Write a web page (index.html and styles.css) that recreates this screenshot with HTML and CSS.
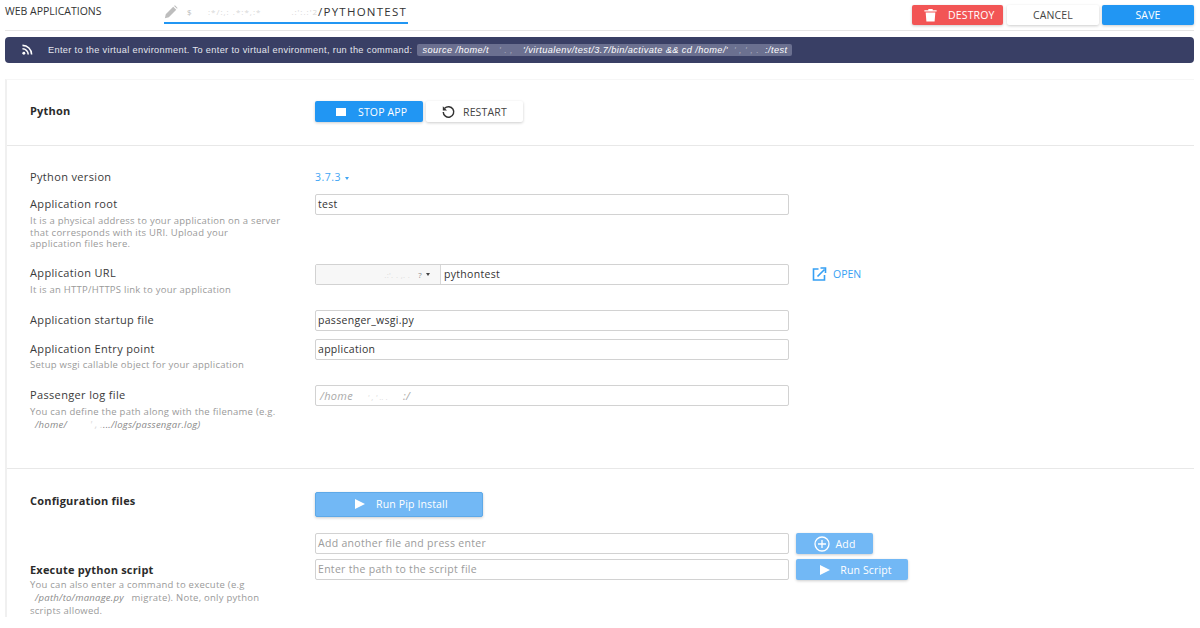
FILE: index.html
```html
<!DOCTYPE html>
<html lang="en">
<head>
<meta charset="utf-8">
<title>Web Applications</title>
<link rel="stylesheet" href="styles.css">
</head>
<body>
<header class="topbar">
  <div class="crumb">WEB APPLICATIONS</div>
  <div class="apptitle">
    <svg class="pencil" viewBox="0 0 16 16"><path d="M1 15l1-4.500L10.500 2l3.500 3.500L5.500 14z M11.500 1l1-.6 3 3-.6 1z" fill="#bdbdbd"/></svg>
    <span class="smudge smudge-s">$</span><span class="smudge smudge-a">:*/:,: .*:*,:*</span><span class="smudge smudge-b">.:':.:'2</span><span class="title-end">/PYTHONTEST</span>
  </div>
  <div class="actions">
    <button class="btn btn-red"><svg class="trash" viewBox="0 0 14 16"><path d="M0 2.500h14V4H0z M4.500 1h5v1.500h-5z M1.500 5h11l-.8 10.500H2.300z" fill="#fff"/></svg><span>DESTROY</span></button>
    <button class="btn btn-cancel">CANCEL</button>
    <button class="btn btn-save">SAVE</button>
  </div>
</header>

<div class="alert">
  <svg class="rss" viewBox="0 0 12 12"><circle cx="2" cy="10" r="1.600" fill="#fff"/><path d="M.5 5.200a6.300 6.300 0 0 1 6.300 6.300M.5 1.500a10 10 0 0 1 10 10" fill="none" stroke="#fff" stroke-width="1.700"/></svg>
  <span class="alert-text">Enter to the virtual environment. To enter to virtual environment, run the command:</span>
  <code class="cmd">source /home/t<span class="gap-a">' . ,</span>'/virtualenv/test/3.7/bin/activate &amp;&amp; cd /home/'<span class="gap-b">' , ' , .</span>:/test</code>
</div>

<main class="card">
  <section class="sec sec-app">
    <div class="row">
      <div class="label strong">Python</div>
      <div class="btns">
        <button class="btn btn-stop"><span class="square"></span><span>STOP APP</span></button>
        <button class="btn btn-restart"><svg class="restart" viewBox="0 0 16 16"><path d="M3.600 3.800A6 6 0 1 1 2 8" fill="none" stroke="#333" stroke-width="1.700"/><path d="M1.500 1.500v4.800h4.800z" fill="#333"/></svg><span>RESTART</span></button>
      </div>
    </div>
  </section>

  <section class="sec sec-form">
    <div class="row row-version">
      <div class="label">Python version</div>
      <div class="version">3.7.3<i class="caret caret-blue"></i></div>
    </div>

    <div class="row row-root">
      <div>
        <div class="label">Application root</div>
        <p class="help help-root">It is a physical address to your application on a server<br>that corresponds with its URI. Upload your<br>application files here.</p>
      </div>
      <div class="field">test</div>
    </div>

    <div class="row row-url">
      <div>
        <div class="label">Application URL</div>
        <p class="help">It is an HTTP/HTTPS link to your application</p>
      </div>
      <div class="field field-group">
        <div class="domain"><span class="smudge">.:'.  . ,. .</span><span class="dom-end">?</span><i class="caret"></i></div>
        <div class="uri">pythontest</div>
      </div>
      <a class="open"><svg class="ext" viewBox="0 0 14 14"><path d="M6 2H1v11h11V8" fill="none" stroke="#2196f3" stroke-width="1.600"/><path d="M5 9.500L12 2.500M8 1h5v5" fill="none" stroke="#2196f3" stroke-width="1.600"/></svg><span>OPEN</span></a>
    </div>

    <div class="row row-startup">
      <div class="label">Application startup file</div>
      <div class="field">passenger_wsgi.py</div>
    </div>

    <div class="row row-entry">
      <div>
        <div class="label">Application Entry point</div>
        <p class="help">Setup wsgi callable object for your application</p>
      </div>
      <div class="field">application</div>
    </div>

    <div class="row row-log">
      <div>
        <div class="label">Passenger log file</div>
        <p class="help help-code">You can define the path along with the filename (e.g.<br><em class="path">/home/<span class="gap-c">' , .</span>.../logs/passengar.log)</em></p>
      </div>
      <div class="field ph ph-path">/home<span class="gap-d">' , ' .. .</span>:/</div>
    </div>
  </section>

  <section class="sec sec-config">
    <div class="row row-pip">
      <div class="label strong">Configuration files</div>
      <div><button class="btn btn-light btn-pip"><svg class="play" viewBox="0 0 10 10"><path d="M0 0l10 5-10 5z" fill="#fff"/></svg><span>Run Pip Install</span></button></div>
    </div>
    <div class="row row-add">
      <div></div>
      <div class="field ph">Add another file and press enter</div>
      <button class="btn btn-light btn-add"><svg class="plus" viewBox="0 0 16 16"><circle cx="8" cy="8" r="7" fill="none" stroke="#fff" stroke-width="1.300"/><path d="M8 4v8M4 8h8" stroke="#fff" stroke-width="1.300"/></svg><span>Add</span></button>
    </div>
    <div class="row row-exec">
      <div>
        <div class="label strong">Execute python script</div>
        <p class="help help-code">You can also enter a command to execute (e.g<br><em class="path">/path/to/manage.py</em> <span class="migrate">migrate). Note, only python</span><br>scripts allowed.</p>
      </div>
      <div class="field ph">Enter the path to the script file</div>
      <button class="btn btn-light btn-run"><svg class="play" viewBox="0 0 10 10"><path d="M0 0l10 5-10 5z" fill="#fff"/></svg><span>Run Script</span></button>
    </div>
  </section>
</main>
</body>
</html>
```

FILE: styles.css
```css
* { box-sizing: border-box; }
html, body { margin: 0; height: 628px; overflow: hidden; background: #fff; }
body { font-family: "Open Sans", sans-serif; color: #333; font-size: 10px; padding: 0 6px 0 5px; }

.topbar { display: flex; align-items: flex-start; height: 31px; border-bottom: 1px solid #e6e6e6; }
.crumb { width: 159px; padding-top: 3px; font-size: 10.500px; line-height: 16px; color: #333; white-space: nowrap; }
.apptitle { display: flex; align-items: center; width: 244px; height: 24px; padding-top: 1px; border-bottom: 2px solid #2196f3; font-size: 11.500px; line-height: 20px; white-space: nowrap; }
.pencil { width: 14px; height: 14px; margin-right: 9px; flex: none; }
.smudge { color: #d8d8d8; font-size: 8px; }
.smudge-s { width: 21px; flex: none; color: #bbb; }
.smudge-a { width: 65px; flex: none; overflow: hidden; letter-spacing: 1px; }
.smudge-b { width: 36px; flex: none; margin-left: 9px; overflow: hidden; letter-spacing: 1px; text-align: right; }
.title-end { letter-spacing: 1.250px; }
.actions { display: flex; margin-left: auto; padding-top: 5px; }

.btn { display: flex; align-items: center; justify-content: center; border: 0; border-radius: 2px; font-family: "Open Sans", sans-serif; font-size: 10.500px; letter-spacing: .15px; padding: 0; color: #fff; box-shadow: 0 1px 3px rgba(0,0,0,.2); white-space: nowrap; }
.btn-red { width: 91px; height: 20px; background: #f25555; justify-content: flex-start; padding-left: 12px; }
.trash { width: 13px; height: 14px; margin-right: 11px; }
.btn-cancel { width: 92px; height: 20px; margin-left: 4px; background: #fff; color: #444; }
.btn-save { width: 92px; height: 20px; margin-left: 3px; background: #2196f3; }

.alert { display: flex; align-items: center; height: 26px; margin-top: 6px; padding-left: 17px; background: #393f65; border-radius: 4px; color: #e4e6ee; font-family: "Liberation Sans", Arial, sans-serif; font-size: 9.200px; white-space: nowrap; }
.rss { width: 11px; height: 11px; margin-right: 15px; flex: none; position: relative; top: -1px; }
.alert-text { letter-spacing: .35px; }
.cmd { margin-left: 5px; padding: 0 5px; height: 12px; line-height: 12px; border-radius: 2px; background: #6b7090; font-family: "Liberation Sans", Arial, sans-serif; font-style: italic; font-size: 9.200px; color: #fff; letter-spacing: .42px; }
.gap-a { display: inline-block; width: 34px; color: #a5a8bc; text-align: center; }
.gap-b { display: inline-block; width: 37px; color: #a5a8bc; text-align: center; }

.card { margin-top: 16px; border-left: 2px solid #f0f0f0; border-top: 1px solid #f6f6f6; }
.sec { padding-left: 23px; border-bottom: 1px solid #e8e8e8; }
.sec:last-child { border-bottom: 0; }
.sec-app { height: 66px; padding-top: 21px; }
.sec-form { height: 323px; padding-top: 21px; }
.sec-config { padding-top: 23px; }

.row { display: grid; grid-template-columns: 285px 474px auto; align-items: start; }
.label { font-size: 11px; line-height: 19px; letter-spacing: .35px; color: #3a3a3a; white-space: nowrap; }
.strong { font-weight: 700; letter-spacing: .2px; color: #2b2b2b; }
.row-pip .label { margin-top: -1px; }
.row-exec .label { margin-top: 1px; }
.row-url .label { margin-top: -1px; }
.help { margin: 1px 0 0; font-size: 9.500px; line-height: 11.500px; color: #9a9a9a; letter-spacing: .25px; white-space: nowrap; }
.help-root { margin-top: 2px; }
.row-url .help { margin-top: 2px; }
.help-code { line-height: 13px; }
.row-exec .help { margin-top: -1px; }
.path { display: inline-block; padding-left: 5px; color: #8a8a8a; font-style: italic; }
.gap-c { display: inline-block; width: 36px; text-align: right; color: #d8d8d8; }
.gap-d { display: inline-block; width: 50px; color: #d8d8d8; font-size: 7px; text-align: center; }
.migrate { margin-left: 5px; }

.btns { display: flex; gap: 3px; }
.btn-stop { width: 108px; height: 21px; background: #2196f3; justify-content: flex-start; padding-left: 21px; }
.square { width: 10px; height: 8px; margin-right: 12px; background: #fff; }
.btn-restart { width: 97px; height: 21px; background: #fff; color: #444; justify-content: flex-start; padding-left: 15px; }
.restart { width: 15px; height: 14px; margin-right: 7px; }

.row-version { height: 20px; }
.version { color: #2196f3; font-size: 10.500px; line-height: 20px; letter-spacing: .5px; opacity: .85; }
.caret { display: inline-block; width: 0; height: 0; margin-left: 4px; vertical-align: middle; border-left: 2.500px solid transparent; border-right: 2.500px solid transparent; border-top: 3px solid #444; }
.caret-blue { border-top-color: #2196f3; }

.field { height: 21px; padding-left: 2px; border: 1px solid #d2d2d2; border-radius: 2px; background: #fff; font-size: 10.500px; line-height: 19px; letter-spacing: .3px; color: #333; white-space: nowrap; overflow: hidden; }
.ph { color: #9b9b9b; }
.ph-path { font-style: italic; font-size: 11px; padding-left: 4px; color: #aaa; }
.row-root { margin-top: 7px; height: 70px; }
.row-url { height: 46px; }
.field-group { display: flex; padding-left: 0; }
.domain { display: flex; align-items: center; justify-content: flex-end; width: 125px; padding-right: 10px; background: #f7f7f7; border-right: 1px solid #d8d8d8; }
.domain .smudge { margin-right: 8px; color: #dcdcdc; }
.dom-end { color: #888; font-size: 8px; }
.uri { padding-left: 3px; }
.open { display: flex; align-items: center; height: 19px; margin-left: 23px; color: #2196f3; font-size: 10.500px; opacity: .9; }
.ext { width: 15px; height: 14px; margin-right: 6px; }
.row-startup { height: 29px; }
.row-entry { height: 46px; }
.row-log { height: 60px; }

.row-pip { height: 41px; }
.btn-light { background: #72b8f5; }
.btn-pip { width: 168px; height: 25px; border: 1px solid #5ea9e8; justify-content: flex-start; padding: 0 0 2px 39px; }
.btn-pip .play { width: 10px; height: 10px; margin-right: 11px; }
.play { width: 9px; height: 9px; }
.row-add { height: 26px; }
.row-add .btn-add { width: 77px; height: 21px; margin-left: 7px; }
.plus { width: 16px; height: 16px; margin-right: 6px; }
.btn-run { width: 112px; height: 21px; margin-left: 7px; padding-left: 8px; }
.btn-run .play { width: 10px; height: 10px; margin-right: 10px; }
```
